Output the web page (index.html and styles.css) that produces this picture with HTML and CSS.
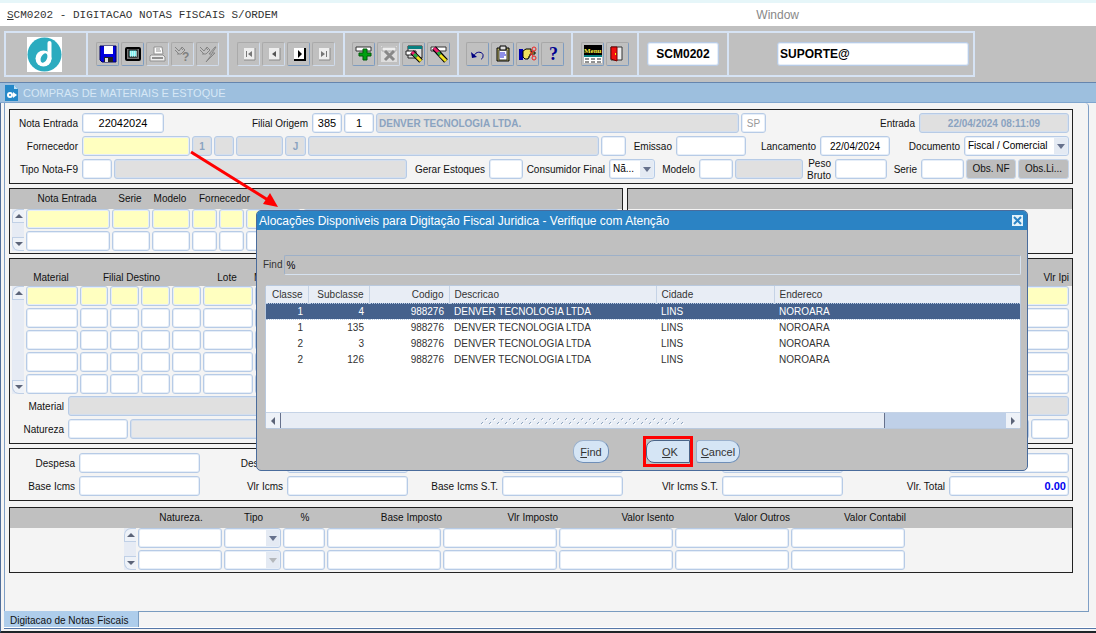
FILE: index.html
```
<!DOCTYPE html>
<html lang="pt-BR">
<head>
  <meta charset="UTF-8">
  <meta name="viewport" content="width=device-width, initial-scale=1.0">
  <title>SCM0202 - Digitacao Notas Fiscais</title>
  <link rel="stylesheet" href="styles.css">
</head>
<body>
  <header class="menubar">
    <span class="program"><u>S</u>CM0202 - DIGITACAO NOTAS FISCAIS S/ORDEM</span>
    <span class="menu-window">Window</span>
  </header>

  <div class="toolbar">
    <div class="tool-frame">
      <div class="group group-logo">
        <svg class="logo" viewBox="0 0 35 35">
          <rect width="35" height="35" fill="#fff"/>
          <circle cx="17.500" cy="17.500" r="17" fill="#2babbf"/>
          <circle cx="16.500" cy="21.500" r="8" fill="#fff"/>
          <line x1="22.500" y1="6" x2="22.500" y2="22" stroke="#fff" stroke-width="4" stroke-linecap="round"/>
          <ellipse cx="17" cy="21" rx="3" ry="5" fill="#2babbf" transform="rotate(25 17 21)"/>
        </svg>
      </div>
      <div class="group">
        <button class="tool" aria-label="Salvar"><svg viewBox="0 0 18 18"><path d="M1 1h16v16H3l-2-2z" fill="#0000e0" stroke="#000060"/><path d="M5 1h9v8H5z" fill="#fff"/><path d="M5 12h9v5H5z" fill="#222"/><path d="M6 13h3v4H6z" fill="#ddd"/></svg></button>
        <button class="tool" aria-label="Tela"><svg viewBox="0 0 18 18"><rect x="2" y="3" width="14" height="12" rx="1" fill="#777" stroke="#000" stroke-width="2"/><rect x="5" y="5" width="8" height="7" fill="#7ff0f0" stroke="#000"/><path d="M6 7h7M6 9h7M6 11h7" stroke="#fff" stroke-dasharray="1 1"/></svg></button>
        <button class="tool off" aria-label="Imprimir"><svg viewBox="0 0 18 18"><path d="M5 2h8l1 7H5z" fill="#fff" stroke="#909090"/><path d="M7 4h4M7 6h5" stroke="#909090"/><path d="M2 10h12l2 2v4H1v-5z" fill="#eee" stroke="#909090"/><path d="M3 13h11" stroke="#909090" stroke-width="2"/></svg></button>
        <button class="tool off" aria-label="Entrar consulta"><svg viewBox="0 0 18 18"><path d="M1 2l4 4 3-4 3 3-4 4H3M1 5l4 4M7 3l2 2" fill="none" stroke="#858585"/><text x="8" y="16" class="glyph-off">?</text></svg></button>
        <button class="tool off" aria-label="Executar consulta"><svg viewBox="0 0 18 18"><path d="M1 2l4 4 3-4 3 3-4 4H3M1 5l4 4M7 3l2 2" fill="none" stroke="#858585"/><path d="M16 2l-6 7h3l-6 8 9-9h-3l4-6z" fill="#bbb" stroke="#858585"/></svg></button>
      </div>
      <div class="group">
        <button class="tool off" aria-label="Primeiro"><svg viewBox="0 0 18 18"><path d="M4 3h11v12H4z" fill="#eee"/><path d="M15 3v12H4" fill="none" stroke="#888"/><path d="M6 6h1v6H6zM12 6v6L8 9z" fill="#777"/></svg></button>
        <button class="tool off" aria-label="Anterior"><svg viewBox="0 0 18 18"><path d="M4 3h11v12H4z" fill="#eee"/><path d="M15 3v12H4" fill="none" stroke="#888"/><path d="M11 6v6L7 9z" fill="#555"/></svg></button>
        <button class="tool" aria-label="Proximo"><svg viewBox="0 0 18 18"><path d="M4 3h11v12H4z" fill="#fff"/><path d="M15 3v12H4" fill="none" stroke="#000" stroke-width="2"/><path d="M8 5v8l4-4z" fill="#000"/></svg></button>
        <button class="tool off" aria-label="Ultimo"><svg viewBox="0 0 18 18"><path d="M4 3h11v12H4z" fill="#eee"/><path d="M15 3v12H4" fill="none" stroke="#888"/><path d="M11 6h1v6h-1zM6 6v6l4-3z" fill="#777"/></svg></button>
      </div>
      <div class="group group-narrow">
        <button class="tool" aria-label="Inserir registro"><svg viewBox="0 0 18 18"><path d="M1 2h15v4H1z" fill="#fff" stroke="#333"/><path d="M8 4h4v4h4v3h-4v4H8v-4H4V8h4z" fill="#00a010" stroke="#005808"/></svg></button>
        <button class="tool off" aria-label="Remover registro"><svg viewBox="0 0 18 18"><path d="M1 1h16v16H1z" fill="#ddd"/><path d="M2 2h14v4H2z" fill="#eee" stroke="#aaa"/><path d="M5 6l9 9M14 6l-9 9" stroke="#888" stroke-width="3"/></svg></button>
        <button class="tool" aria-label="Limpar bloco"><svg viewBox="0 0 18 18"><path d="M3 1h14v12H3z" fill="#ddd" stroke="#222"/><path d="M3 1h14v3H3z" fill="#088080"/><path d="M1 6h10v4H1z" fill="#fff" stroke="#222"/><path d="M7 7l9 9" stroke="#000" stroke-width="5"/><path d="M7 7l5 5" stroke="#f02070" stroke-width="3"/><path d="M9 9l3 3" stroke="#20b040" stroke-width="3"/><path d="M12 12l4 4" stroke="#f0e020" stroke-width="3"/></svg></button>
        <button class="tool" aria-label="Limpar registro"><svg viewBox="0 0 18 18"><path d="M1 2h15v4H1z" fill="#fff" stroke="#333"/><path d="M4 3l12 13" stroke="#000" stroke-width="5"/><path d="M4 3l5 5" stroke="#f02070" stroke-width="3"/><path d="M8 7l2 3" stroke="#20b040" stroke-width="3"/><path d="M10 10l6 6" stroke="#f0e020" stroke-width="3"/></svg></button>
      </div>
      <div class="group group-narrow">
        <button class="tool" aria-label="Desfazer"><svg viewBox="0 0 18 18"><path d="M5 11c2-6 10-4 9 0 0 2-1 3-2 3" fill="none" stroke="#000080" stroke-width="1"/><path d="M2 7l1 6 5-1z" fill="#000080"/></svg></button>
        <button class="tool" aria-label="Colar"><svg viewBox="0 0 18 18"><path d="M3 3h12v13H3z" fill="#b8b060" stroke="#000"/><path d="M5 5h8v10H5z" fill="#fff" stroke="#333"/><path d="M6 1h6v4H6z" fill="#ddd" stroke="#000"/><path d="M6 8h5M6 10h6M6 12h4" stroke="#2020d0"/></svg></button>
        <button class="tool" aria-label="Lista"><svg viewBox="0 0 18 18"><path d="M0 4h4v11H0z" fill="#0000b0"/><path d="M4 6l3-2h5v3h4v2h-5v2h-1v2H9v1H6l-2-2z" fill="#f0e060" stroke="#000"/><circle cx="15" cy="4" r="2" fill="none" stroke="#f02020"/><circle cx="15" cy="13" r="2" fill="none" stroke="#f02020"/><path d="M14 6l-3 5M14 11l-3-5" stroke="#f02020"/></svg></button>
        <button class="tool" aria-label="Ajuda"><svg viewBox="0 0 18 18"><text x="5" y="15" class="glyph-help">?</text></svg></button>
      </div>
      <div class="group">
        <button class="tool" aria-label="Menu"><svg viewBox="0 0 18 18"><path d="M0 0h18v10H0z" fill="#000"/><text x="0" y="8" class="glyph-menu">Menu</text><path d="M0 10h18v2H0z" fill="#088080"/><path d="M0 12h18v6H0z" fill="#fff"/><path d="M1 14h16M1 17h16" stroke="#222" stroke-dasharray="4 2"/></svg></button>
        <button class="tool" aria-label="Sair"><svg viewBox="0 0 18 18"><path d="M2 2h11v13H2z" fill="#eee" stroke="#333"/><path d="M2 2h6v14l-6-2z" fill="#f01010" stroke="#700"/><path d="M6 8h1v2H6z" fill="#ff0"/></svg></button>
      </div>
      <div class="group group-code"><input class="field bar-field center" aria-label="Programa" value="SCM0202"></div>
      <div class="group group-user"><input class="field bar-field" aria-label="Usuario" value="SUPORTE@"></div>
    </div>
  </div>

  <main class="window">
    <h1 class="window-title">
      <svg viewBox="0 0 13 16"><path d="M0 0h9l4 4v12H0z" fill="#2588c8"/><path d="M9 0v4h4z" fill="#bfe0f5"/><circle cx="5" cy="10" r="2" fill="none" stroke="#fff" stroke-width="2"/><path d="M8 7l4 3-4 3z" fill="#fff"/></svg>
      COMPRAS DE MATERIAIS E ESTOQUE
    </h1>

    <div class="canvas">
      <section class="panel header-panel">
        <div class="row row-nota">
          <label for="nota">Nota Entrada</label>
          <input class="field center large" id="nota" value="22042024">
          <label for="filial">Filial Origem</label>
          <input class="field center large" id="filial" value="385">
          <input class="field center large" aria-label="Filial digito" value="1">
          <input class="field locked" aria-label="Nome da filial" value="DENVER TECNOLOGIA LTDA." readonly>
          <input class="field center dim" aria-label="UF" value="SP" readonly>
          <label for="entrada">Entrada</label>
          <input class="field locked center" id="entrada" value="22/04/2024 08:11:09" readonly>
        </div>
        <div class="row row-fornecedor">
          <label for="fornecedor">Fornecedor</label>
          <input class="field current" id="fornecedor">
          <input class="field locked center" aria-label="Classe" value="1" readonly>
          <input class="field locked" aria-label="Subclasse" readonly>
          <input class="field locked" aria-label="Codigo" readonly>
          <input class="field locked center" aria-label="Pessoa" value="J" readonly>
          <input class="field locked" aria-label="Razao social" readonly>
          <input class="field" aria-label="UF fornecedor">
          <label for="emissao">Emissao</label>
          <input class="field" id="emissao">
          <label for="lancamento">Lancamento</label>
          <input class="field center" id="lancamento" value="22/04/2024">
          <label for="documento">Documento</label>
          <div class="combo"><select class="field" id="documento"><option>Fiscal / Comercial</option></select></div>
        </div>
        <div class="row row-tipo">
          <label for="tipo">Tipo Nota-F9</label>
          <input class="field" id="tipo">
          <input class="field locked" aria-label="Descricao do tipo" readonly>
          <label for="gerar">Gerar Estoques</label>
          <input class="field" id="gerar">
          <label for="consumidor">Consumidor Final</label>
          <div class="combo"><select class="field" id="consumidor"><option>Nã...</option></select></div>
          <label for="modelo">Modelo</label>
          <input class="field" id="modelo">
          <input class="field locked" aria-label="Descricao do modelo" readonly>
          <label class="two-lines" for="peso">Peso Bruto</label>
          <input class="field" id="peso">
          <label for="serie">Serie</label>
          <input class="field" id="serie">
          <button class="obs">Obs. NF</button>
          <button class="obs">Obs.Li...</button>
        </div>
      </section>

      <div class="split">
        <section class="panel">
          <div class="heads cols-notas">
            <span></span><span>Nota Entrada</span><span>Serie</span><span>Modelo</span><span class="wide">Fornecedor</span>
          </div>
          <div class="block">
            <div class="scroller"><button class="up" aria-label="Acima"></button><button class="down" aria-label="Abaixo"></button></div>
            <div class="records cols-notas" data-rows="2" data-cols="7" data-name="Nota"></div>
          </div>
        </section>
        <section class="panel">
          <div class="heads"></div>
        </section>
      </div>

      <section class="panel">
        <div class="heads tall cols-itens">
          <span></span><span>Material</span><span class="span-four">Filial Destino</span><span>Lote</span><span class="left">Medida</span><span class="right">Vlr Ipi</span>
        </div>
        <div class="block">
          <div class="scroller"><button class="up" aria-label="Acima"></button><button class="down" aria-label="Abaixo"></button></div>
          <div class="records cols-itens" data-rows="5" data-cols="8" data-name="Item"></div>
        </div>
        <div class="row row-material">
          <label for="material">Material</label>
          <input class="field locked" id="material" readonly>
        </div>
        <div class="row row-natureza">
          <label for="natureza">Natureza</label>
          <input class="field" id="natureza">
          <input class="field locked pale" aria-label="Descricao da natureza" readonly>
          <input class="field" aria-label="Codigo fiscal">
        </div>
      </section>

      <section class="panel totals">
        <div class="row row-totais">
          <label for="despesa">Despesa</label><input class="field" id="despesa">
          <label for="desconto">Desconto</label><input class="field" id="desconto">
          <label for="frete">Frete</label><input class="field" id="frete">
          <label for="seguro">Seguro</label><input class="field" id="seguro">
          <label for="ipi">Vlr Ipi</label><input class="field" id="ipi">
        </div>
        <div class="row row-totais">
          <label for="base">Base Icms</label><input class="field" id="base">
          <label for="vlr">Vlr Icms</label><input class="field" id="vlr">
          <label for="base-st">Base Icms S.T.</label><input class="field" id="base-st">
          <label for="vlr-st">Vlr Icms S.T.</label><input class="field" id="vlr-st">
          <label for="total">Vlr. Total</label><input class="field total" id="total" value="0.00">
        </div>
      </section>

      <section class="panel taxes">
        <div class="heads cols-impostos">
          <span></span><span>Natureza.</span><span>Tipo</span><span>%</span><span class="right">Base Imposto</span><span class="right">Vlr Imposto</span><span class="right">Valor Isento</span><span class="right">Valor Outros</span><span class="right">Valor Contabil</span>
        </div>
        <div class="block">
          <div class="scroller"><button class="up" aria-label="Acima"></button><button class="down" aria-label="Abaixo"></button></div>
          <div class="records cols-impostos" data-rows="2" data-cols="8" data-combo="1" data-name="Imposto"></div>
        </div>
      </section>
    </div>

    <nav class="tabs"><a class="tab" href="#">Digitacao de Notas Fiscais</a><span class="tab-rest"></span></nav>

    <div class="dialog" role="dialog" aria-labelledby="dialog-title">
      <div class="dialog-title">
        <h2 id="dialog-title">Alocações Disponiveis para Digitação Fiscal Juridica - Verifique com Atenção</h2>
        <button class="close" aria-label="Fechar"><svg viewBox="0 0 11 11"><path d="M2 2l7 7M9 2l-7 7" stroke="#2c83c4" stroke-width="2"/></svg></button>
      </div>
      <div class="find-row">
        <label for="find">Find</label>
        <input id="find" value="%">
      </div>
      <div class="list">
        <table>
          <thead>
            <tr><th class="c-classe num">Classe</th><th class="c-sub num">Subclasse</th><th class="c-codigo num">Codigo</th><th class="c-desc">Descricao</th><th class="c-cidade">Cidade</th><th>Endereco</th></tr>
          </thead>
          <tbody>
            <tr class="selected"><td class="num">1</td><td class="num">4</td><td class="num">988276</td><td>DENVER TECNOLOGIA LTDA</td><td>LINS</td><td>NOROARA</td></tr>
            <tr><td class="num">1</td><td class="num">135</td><td class="num">988276</td><td>DENVER TECNOLOGIA LTDA</td><td>LINS</td><td>NOROARA</td></tr>
            <tr><td class="num">2</td><td class="num">3</td><td class="num">988276</td><td>DENVER TECNOLOGIA LTDA</td><td>LINS</td><td>NOROARA</td></tr>
            <tr><td class="num">2</td><td class="num">126</td><td class="num">988276</td><td>DENVER TECNOLOGIA LTDA</td><td>LINS</td><td>NOROARA</td></tr>
          </tbody>
        </table>
        <div class="hscroll">
          <button class="arrow-left" aria-label="Esquerda"></button>
          <div class="thumb">
            <svg class="grip" width="204" height="8"><defs><pattern id="ticks" width="8" height="8" patternUnits="userSpaceOnUse"><path d="M4 3l2-2M0 7l2-2" stroke="#8fa5c0"/><path d="M5 4l2-2M1 8l2-2" stroke="#fff"/></pattern></defs><rect width="204" height="8" fill="url(#ticks)"/></svg>
          </div>
          <div class="track"></div>
          <button class="arrow-right" aria-label="Direita"></button>
        </div>
      </div>
      <div class="actions">
        <button class="action find"><u>F</u>ind</button>
        <span class="marked"><button class="action ok"><u>O</u>K</button></span>
        <button class="action cancel"><u>C</u>ancel</button>
      </div>
    </div>

    <svg class="pointer" width="92" height="62" viewBox="0 0 92 62">
      <path d="M1 2L78 50" stroke="#f00" stroke-width="3"/>
      <path d="M88 57L73 54L80 43z" fill="#f00"/>
    </svg>
  </main>

  <script>
    // fill the multi-record blocks
    var blocks = document.querySelectorAll('.records');

    for (var i = 0; i < blocks.length; i++) {
      var data = blocks[i].dataset;
      var html = '';

      for (var r = 0; r < data.rows; r++) {
        for (var c = 0; c < data.cols; c++) {
          var name = data.name + ' ' + (r + 1) + '.' + (c + 1);
          if (data.combo == c) {
            html += '<div class="combo' + (r ? ' faded' : '') + '"><select class="field" aria-label="' + name + '"><option></option></select></div>';
          } else {
            html += '<input class="field' + (r == 0 ? ' first' : '') + '" aria-label="' + name + '">';
          }
        }
      }
      blocks[i].innerHTML = html;
    }
  </script>
</body>
</html>
```
FILE: styles.css
```
*{
  box-sizing: border-box;
  margin: 0;
  padding: 0;
}
body{
  display: flex;
  flex-direction: column;
  min-height: 100vh;
  font: 10px/12px "Liberation Sans", Arial, sans-serif;
  color: #111;
  background: #f4f4f4;
}
input,
select,
button{
  font: inherit;
  color: inherit;
  min-width: 0;
}

/* menu bar */
.menubar{
  display: flex;
  justify-content: space-between;
  align-items: center;
  height: 26px;
  padding: 0 297px 0 7px;
  border-top: 3px solid #e6f6f9;
  background: #fff;
}
.program{
  font-family: "Liberation Mono", monospace;
  font-size: 11px;
  color: #333;
}
.menu-window{
  font-size: 12px;
  color: #888;
}

/* toolbar */
.toolbar{
  padding: 5px 4px;
  background: #c0c0c0;
}
.tool-frame{
  display: flex;
  width: fit-content;
  height: 46px;
  border: 2px solid #d6e3f4;
  border-width: 2px 0 2px 2px;
}
.group{
  display: flex;
  align-items: center;
  gap: 2px;
  padding: 0 8px;
  border-right: 2px solid #d6e3f4;
}
.group-logo{
  padding: 0 24px 0 21px;
}
.group-narrow{
  padding: 0 7px;
}
.logo{
  width: 35px;
  height: 35px;
}
.tool{
  display: flex;
  align-items: center;
  justify-content: center;
  width: 23px;
  height: 24px;
  border: 1px solid;
  border-color: #a8a8a8 #7e9cc0 #7e9cc0 #a8a8a8;
  border-radius: 2px;
  background: #c0c0c0;
}
.off{
  border-color: #aaa #d0dcec #d0dcec #aaa;
}
.tool svg{
  flex: none;
  width: 18px;
  height: 18px;
  overflow: visible;
}
.glyph-off{
  font: bold 12px "Liberation Sans", sans-serif;
  fill: #808080;
}
.glyph-help{
  font: bold 18px "Liberation Serif", serif;
  fill: #000090;
}
.glyph-menu{
  font: bold 7px "Liberation Serif", serif;
  fill: #f8f040;
}
.bar-field{
  font-size: 12px;
  font-weight: bold;
}
.group-code .field{
  width: 72px;
}
.group-user{
  padding: 0 4px 0 48px;
}
.group-user .field{
  width: 192px;
}

/* fields */
.field{
  width: 100%;
  height: 20px;
  padding: 0 2px;
  border: 1px solid #b7cbe6;
  border-radius: 3px;
  background: #fff;
  box-shadow: inset 0 0 0 1px #e6eef8;
  color: #000;
}
.field.bar-field{
  height: 24px;
}
.large{
  font-size: 11px;
}
.center{
  text-align: center;
}
.locked{
  background: #e0e0e0;
  box-shadow: inset 0 0 0 1px #d4dfee;
  color: #8aa3c0;
  font-weight: bold;
}
.pale{
  background: #e8e8e8;
}
.dim{
  color: #999;
}
.current,
.cols-notas .first,
.cols-itens .first{
  background: #ffffc0;
}
.total{
  text-align: right;
  font-size: 11px;
  font-weight: bold;
  color: #0000f0;
}
.combo{
  position: relative;
}
.combo .field{
  display: block;
  padding-left: 3px;
  appearance: none;
}
.combo::before{
  content: '';
  position: absolute;
  top: 2px;
  right: 2px;
  bottom: 2px;
  width: 13px;
  background: #e4eaf3;
  pointer-events: none;
}
.combo::after,
.up::after,
.down::after{
  content: '';
  display: block;
  border: 4px solid transparent;
}
.combo::after{
  position: absolute;
  top: 8px;
  right: 4px;
  border-top: 5px solid #66718c;
  border-bottom: 0;
  pointer-events: none;
}
.combo.faded::after{
  border-top-color: #b4b8bc;
}
.obs{
  height: 20px;
  border: 1px solid #c5d5ea;
  border-radius: 3px;
  background: #bdbdbd;
}

/* window */
.window{
  position: relative;
  flex: 1;
  display: flex;
  flex-direction: column;
  padding-left: 3px;
  border-left: 1px solid #4f6d9a;
  border-bottom: 2px solid #1e2428;
}
.window-title{
  display: flex;
  align-items: center;
  gap: 5px;
  height: 21px;
  margin-left: -4px;
  padding-left: 5px;
  border-top: 1px solid #6685ad;
  border-bottom: 1px solid #7fa6cf;
  background: #9dbfde;
  font-size: 11px;
  font-weight: normal;
  color: #d6e7f5;
}
.window-title svg{
  width: 13px;
  height: 16px;
}
.canvas{
  flex: 1;
  display: flex;
  flex-direction: column;
  gap: 4px;
  margin-right: 7px;
  padding: 6px 15px 6px 4px;
  border-left: 1px solid #7f9fc6;
  border-right: 1px solid #7f9fc6;
  border-radius: 0 4px 0 0;
}
.panel{
  border: 1px solid #222;
  background: #f4f4f4;
}
.header-panel{
  height: 75px;
}
.row{
  display: grid;
  gap: 2px;
  align-items: center;
  padding: 3px 3px 0 0;
}
.row label{
  padding: 2px 2px 0 0;
  text-align: right;
  white-space: nowrap;
}
.row .two-lines{
  height: 20px;
  margin-top: -6px;
  white-space: normal;
}
.row-nota{
  grid-template-columns: 70px 82px 144px 30px 30px 1fr 25px 149px 150px;
}
.row-fornecedor{
  grid-template-columns: 70px 108px 20px 20px 47px 21px 1fr 25px 46px 70px 70px 70px 70px 105px;
}
.row-tipo{
  grid-template-columns: 70px 30px 1fr 78px 34px 82px 46px 40px 34px 68px 28px 52px 30px 43px 50px 51px;
}
.row-material{
  grid-template-columns: 56px 1fr;
  padding-top: 0;
}
.row-natureza{
  grid-template-columns: 56px 60px 1fr 38px;
  padding-bottom: 4px;
}
.row-totais{
  grid-template-columns: 67px 121px 83px 121px 90px 121px 95px 121px 1fr 120px;
}
.totals{
  padding: 1px 0 4px;
}
.split{
  display: grid;
  grid-template-columns: 614px 1fr;
  gap: 4px;
}

/* multi-record blocks */
.heads,
.records{
  display: grid;
  column-gap: 2px;
}
.heads{
  height: 20px;
  align-items: center;
  background: #c0c0c0;
  text-align: center;
  white-space: nowrap;
}
.heads.tall{
  height: 27px;
  padding-top: 11px;
}
.block{
  display: flex;
  gap: 2px;
  padding: 0 3px 2px 2px;
}
.records{
  flex: 1;
  row-gap: 2px;
}
.heads.cols-notas{
  grid-template-columns: 13px 84px 38px 38px 25px 25px 55px 1fr;
}
.records.cols-notas{
  grid-template-columns: 84px 38px 38px 25px 25px 55px 1fr;
}
.heads.cols-itens{
  grid-template-columns: 13px 52px 28px 29px 29px 29px 50px 1fr 70px;
  padding-right: 3px;
}
.records.cols-itens{
  grid-template-columns: 52px 28px 29px 29px 29px 50px 1fr 70px;
}
.heads.cols-impostos{
  grid-template-columns: 13px 84px 57px 42px 114px 114px 114px 114px 114px;
}
.records.cols-impostos{
  grid-template-columns: 84px 57px 42px 114px 114px 114px 114px 114px;
}
.taxes{
  margin-top: 2px;
}
.taxes .heads,
.taxes .block{
  padding-left: 114px;
}
.wide{
  grid-column: span 3;
  padding-left: 8px;
  text-align: left;
}
.span-four{
  grid-column: span 4;
  padding-right: 16px;
}
.left{
  text-align: left;
}
.right{
  text-align: right;
}
.scroller{
  display: flex;
  flex-direction: column;
  justify-content: space-between;
  width: 12px;
  background: #e6ebf4;
}
.scroller button{
  display: flex;
  align-items: center;
  justify-content: center;
  height: 14px;
  border: 1px solid #c0d0e6;
  border-right: 0;
  background: #eef2f8;
}
.scroller .up{
  border-radius: 7px 0 0 0;
}
.scroller .down{
  border-radius: 0 0 0 7px;
}
.up::after{
  border-bottom-color: #5c6478;
  border-top: 0;
}
.down::after{
  border-top-color: #5c6478;
  border-bottom: 0;
}

/* tabs */
.tabs{
  display: flex;
  height: 17px;
  margin-bottom: 3px;
  border-bottom: 1px solid #fff;
  box-shadow: 0 1px 0 #5577a8;
}
.tab{
  width: 135px;
  padding: 4px 0 0 6px;
  border-right: 1px solid #7a9cc0;
  background: #aecdeb;
  color: #111;
  text-decoration: none;
}
.tab-rest{
  flex: 1;
  margin-right: 7px;
  border-top: 1px solid #7a9cc0;
}

/* dialog */
.dialog{
  position: absolute;
  top: 128px;
  left: 255px;
  right: 68px;
  border: 1px solid #4a6c9c;
  border-radius: 5px;
  background: #c0c0c0;
  color: #333;
}
.dialog-title{
  display: flex;
  align-items: center;
  justify-content: space-between;
  height: 19px;
  padding: 0 4px 0 2px;
  border-radius: 4px 4px 0 0;
  background: #2b83c4;
}
.dialog-title h2{
  font-size: 12px;
  font-weight: normal;
  color: #fff;
}
.close{
  display: flex;
  width: 11px;
  height: 11px;
  border: 0;
  background: #e4f2fa;
}
.find-row{
  display: flex;
  align-items: center;
  gap: 2px;
  padding: 25px 6px 10px;
}
#find{
  flex: 1;
  height: 20px;
  padding-left: 1px;
  border: 1px solid;
  border-color: #9db0c8 #d6e2f0 #d6e2f0 #9db0c8;
  border-radius: 2px;
  background: #c0c0c0;
  color: #000;
}
.list{
  margin: 0 6px 0 8px;
  border: 1px solid #b9c9de;
  border-radius: 3px;
  background: #fff;
}
.list table{
  width: 100%;
  margin-bottom: 45px;
  border-collapse: collapse;
  table-layout: fixed;
}
.list th,
.list td{
  height: 16px;
  padding: 1px 5px 0;
  text-align: left;
  font-weight: normal;
  white-space: nowrap;
}
.list th{
  height: 17px;
  border-right: 1px solid #c5d3e6;
  background: #e8edf5;
}
.list th:last-child{
  border-right: 0;
}
.list .num{
  text-align: right;
}
.c-classe{
  width: 42px;
}
.c-sub{
  width: 61px;
}
.c-codigo{
  width: 80px;
}
.c-desc{
  width: 207px;
}
.c-cidade{
  width: 118px;
}
.selected td{
  border-top: 1px dotted #b9cbe4;
  border-bottom: 1px dotted #b9cbe4;
  background: #45618c;
  color: #fff;
}
.hscroll{
  display: flex;
  height: 16px;
  border-top: 1px solid #c5d3e6;
}
.hscroll button{
  display: flex;
  align-items: center;
  justify-content: center;
  width: 14px;
  border: 0;
  background: #eef2f8;
}
.arrow-left::after,
.arrow-right::after{
  content: '';
  border: 4px solid transparent;
}
.arrow-left::after{
  border-right-color: #5c6478;
  border-left: 0;
}
.arrow-right::after{
  border-left-color: #5c6478;
  border-right: 0;
}
.thumb{
  flex: 5;
  display: flex;
  align-items: center;
  justify-content: center;
  border: 1px solid #66718c;
  border-width: 0 1px;
  background: #e8edf5;
}
.track{
  flex: 1;
  background: #bfd0e8;
}
.actions{
  display: flex;
  padding: 11px 0 7px 316px;
}
.action{
  height: 23px;
  border: 1px solid;
  border-color: #9ab0cc #6f8fb8 #6f8fb8 #9ab0cc;
  background: #d5e5f5;
  font-size: 11px;
}
.find{
  width: 36px;
  margin-right: 37px;
  border-radius: 10px;
}
.ok{
  width: 44px;
  padding-left: 4px;
  border-color: #4a6488;
  border-radius: 8px 0 0 8px;
}
.cancel{
  width: 44px;
  border-radius: 3px 10px 10px 3px;
}
.marked{
  position: relative;
  margin-right: 6px;
}
.marked::after{
  content: '';
  position: absolute;
  inset: -4px -3px;
  border: 3px solid #f00;
  pointer-events: none;
}

/* arrow from the supplier field to the dialog */
.pointer{
  position: absolute;
  top: 68px;
  left: 189px;
}
```
